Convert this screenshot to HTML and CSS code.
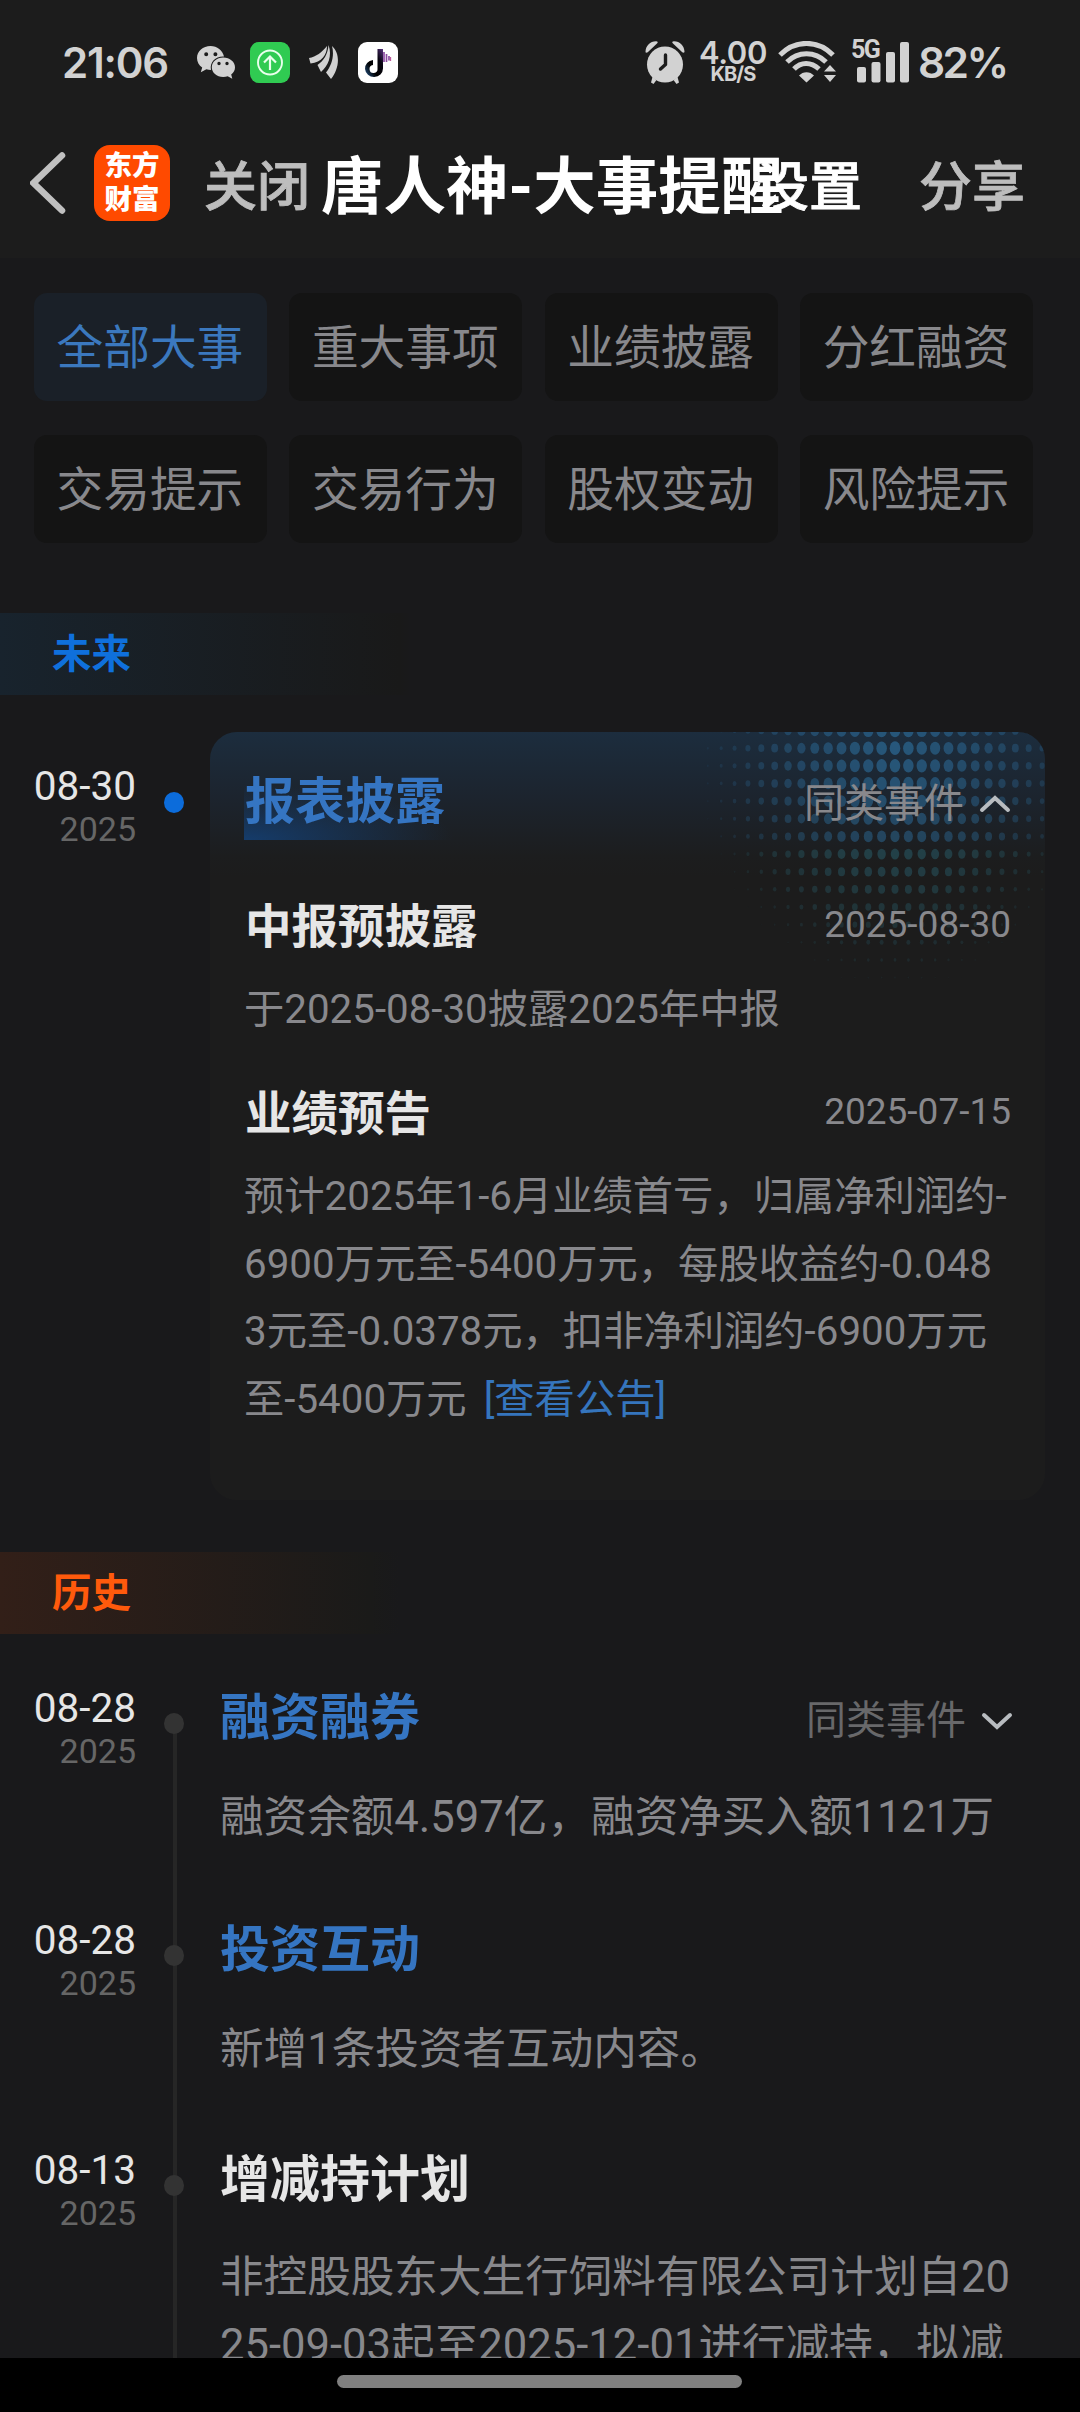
FILE: index.html
```html
<!DOCTYPE html>
<html lang="zh-CN">
<head>
<meta charset="utf-8">
<title>唐人神-大事提醒</title>
<link rel="stylesheet" href="styles.css">
</head>
<body>
<div class="screen">
  <header class="top">
    <div class="status">
      <span class="clock">21:06</span>
      <svg class="i-wechat" viewBox="0 0 38 33" width="38" height="33">
        <path fill="#d2d2d2" fill-rule="evenodd" d="M13.500 0C6 0 0 5.200 0 12c0 4 2 7.300 5.200 9.500L3.800 26.200 9.400 23.300c1.500.5 3 .7 4.600.7-1.500-8.500 5-14 13-13.500C25.600 4.500 20.200 0 13.500 0ZM9.200 6.200a2 2 0 1 1 0 4 2 2 0 0 1 0-4Zm9.200 0a2 2 0 1 1 0 4 2 2 0 0 1 0-4Z"/>
        <path fill="#d2d2d2" fill-rule="evenodd" d="M26.200 11.500C19.600 11.500 14.800 16 14.800 21.300S19.600 31 26.200 31c1.700 0 3-.3 4.500-.8l4.600 2.500-1.100-4.200c2.500-1.800 3.800-4.200 3.800-7.200 0-5.300-5-9.800-11.800-9.800ZM22 15.800a1.700 1.700 0 1 1 0 3.400 1.700 1.700 0 0 1 0-3.400Zm8 0a1.700 1.700 0 1 1 0 3.400 1.700 1.700 0 0 1 0-3.400Z"/>
      </svg>
      <svg class="i-up" viewBox="0 0 40 41" width="40" height="41">
        <rect width="40" height="41" rx="9" fill="#30cb52"/>
        <g fill="none" stroke="#e8ffec" stroke-width="1.900"><circle cx="20" cy="20.500" r="12"/><path d="M20 28V14.500M14 20.500l6-6 6 6" stroke-width="2.200"/></g>
      </svg>
      <svg class="i-wing" viewBox="0 0 30 34" width="30" height="34">
        <g fill="#d2d2d2"><path d="M0 13C7 12 13 7 18 1c0 9-5 16-16.500 17.500Z"/><path d="M19.500 0c4 11-.5 21-7.500 27L8.500 20C14.500 16 19 9 19.500 0Z"/><path d="M23 1c9 8 7 23-1 33L17 27.500C23 20 25.500 10 23 1Z"/></g>
      </svg>
      <svg class="i-tiktok" viewBox="0 0 40 41" width="40" height="41">
        <defs><linearGradient id="note" x1="0" y1="1" x2="1" y2="0"><stop offset="0" stop-color="#28588c"/><stop offset=".35" stop-color="#000"/><stop offset=".7" stop-color="#080510"/><stop offset="1" stop-color="#56307c"/></linearGradient></defs>
        <rect width="40" height="41" rx="9" fill="#fff"/>
        <path fill="url(#note)" d="M19.500 7h5.500v19.500a9 8.500 0 1 1-10-8.500v5a4 4 0 1 0 4.500 3.500Z"/>
        <path stroke="#8c4ca3" stroke-width="1.700" d="M26 10v10M28.500 12v8M31 14v4.500"/>
        <path stroke="#bc5c9c" stroke-width="1.300" d="M32.500 15v4"/>
      </svg>
      <svg class="i-alarm" viewBox="0 0 40 43" width="40" height="43">
        <g fill="#d2d2d2"><circle cx="20" cy="23.500" r="18"/><path d="M.5 10.500C1 4.500 5 .5 11 .3 13 .3 13.200 1.500 12 2.500L3 11C2 12 .500 12 .5 10.500ZM39.500 10.500C39 4.500 35 .5 29 .3 27 .3 26.800 1.500 28 2.500L37 11C38 12 39.500 12 39.500 10.500Z"/><path d="M7.500 36l4 3L8.500 43 6 41.500ZM32.500 36l-4 3 3 4 2.500-1.500Z"/></g>
        <path d="M20.500 14v9.500L15.500 28" fill="none" stroke="#1c1c1c" stroke-width="3.400" stroke-linecap="round" stroke-linejoin="round"/>
      </svg>
      <div class="speed"><b>4.00</b><i>KB/S</i></div>
      <svg class="i-wifi" viewBox="0 0 58 42" width="58" height="42">
        <g fill="none" stroke="#d2d2d2" stroke-width="5"><path d="M2 14C17-1.500 40-1.500 55 14"/><path d="M9 21C20 10 37 10 48 21"/><path d="M16 28C23 20.500 33 20.500 41 28"/></g>
        <path fill="#d2d2d2" d="M21 34.500C25 30 32 30 36 34.500L28.500 41.500ZM52 24l6 6.500H46ZM46 34h12l-6 7Z"/>
      </svg>
      <div class="signal">
        <span class="gen">5G</span>
        <svg viewBox="0 0 58 42" width="58" height="42"><g fill="#d2d2d2"><rect x="6" y="26" width="9" height="15.500" rx="2"/><rect x="20.500" y="21" width="9" height="20.500" rx="2"/><rect x="35" y="11" width="9" height="30.500" rx="2"/><rect x="49" y="1" width="9" height="40.500" rx="2"/></g></svg>
      </div>
      <span class="battery">82%</span>
    </div>
    <nav class="nav">
      <svg class="back" viewBox="0 0 36 62" width="36" height="62"><path d="M32 3.500L3.500 31 32 58.500" fill="none" stroke="#c0c0c0" stroke-width="6.500" stroke-linecap="round"/></svg>
      <div class="logo"><span>东方</span><span>财富</span></div>
      <span class="nav-link">关闭</span>
      <h1 class="title">唐人神-大事提醒</h1>
      <span class="nav-link setting">设置</span>
      <span class="nav-link share">分享</span>
    </nav>
  </header>

  <div class="filters">
    <span class="chip chip-on">全部大事</span><span class="chip">重大事项</span><span class="chip">业绩披露</span><span class="chip">分红融资</span>
    <span class="chip">交易提示</span><span class="chip">交易行为</span><span class="chip">股权变动</span><span class="chip">风险提示</span>
  </div>

  <h2 class="section future">未来</h2>
  <div class="row row-card">
    <div class="date"><b>08-30</b><span>2025</span></div>
    <div class="axis"><i class="dot"></i></div>
    <article class="card">
      <svg class="halftone" id="halftone" viewBox="0 0 350 250" width="350" height="250"></svg>
      <div class="head">
        <h3 class="event link marked">报表披露</h3>
        <span class="more">同类事件<svg viewBox="0 0 32 18" width="32" height="18"><path d="M3 15L16 3l13 12"/></svg></span>
      </div>
      <div class="sub first"><h4>中报预披露</h4><time>2025-08-30</time></div>
      <p class="detail">于2025-08-30披露2025年中报</p>
      <div class="sub second"><h4>业绩预告</h4><time>2025-07-15</time></div>
      <p class="detail">预计2025年1-6月业绩首亏，归属净利润约-<br>6900万元至-5400万元，每股收益约-0.048<br>3元至-0.0378元，扣非净利润约-6900万元<br>至-5400万元 <a class="notice">[查看公告]</a></p>
    </article>
  </div>

  <h2 class="section history">历史</h2>
  <div class="list">
    <div class="row item">
      <div class="date"><b>08-28</b><span>2025</span></div>
      <div class="axis line-start"><i class="dot"></i></div>
      <div class="body">
        <div class="head"><h3 class="event link">融资融券</h3>
        <span class="more dim">同类事件<svg viewBox="0 0 32 18" width="32" height="18"><path d="M3 3l13 12L29 3"/></svg></span></div>
        <p>融资余额4.597亿，融资净买入额1121万</p>
      </div>
    </div>
    <div class="row item item-short">
      <div class="date"><b>08-28</b><span>2025</span></div>
      <div class="axis line"><i class="dot"></i></div>
      <div class="body">
        <div class="head"><h3 class="event link">投资互动</h3></div>
        <p>新增1条投资者互动内容。</p>
      </div>
    </div>
    <div class="row item">
      <div class="date"><b>08-13</b><span>2025</span></div>
      <div class="axis line"><i class="dot"></i></div>
      <div class="body">
        <div class="head"><h3 class="event">增减持计划</h3></div>
        <p class="long">非控股股东大生行饲料有限公司计划自20<br>25-09-03起至2025-12-01进行减持，拟减</p>
      </div>
    </div>
  </div>
  <footer class="home"><span></span></footer>
</div>
<script src="halftone.js"></script>
</body>
</html>
```
FILE: styles.css
```css
* { box-sizing: border-box; margin: 0; padding: 0; }
body { background: #19191b; }
.screen {
  width: 1080px; height: 2412px; overflow: hidden;
  display: flex; flex-direction: column;
  font-family: Roboto, "Noto Sans CJK SC", sans-serif;
  color: #e6e6e6; white-space: nowrap;
  background: #19191b;
}
svg { display: block; flex: none; }
i, b { font-style: normal; font-weight: 400; }

/* status bar */
.top { height: 258px; flex: none; background: #1c1c1c; }
.status { height: 124px; display: flex; align-items: center; color: #d2d2d2; font-family: Inter, sans-serif; font-weight: 600; }
.clock { width: 135px; padding-left: 62px; font-size: 42px; letter-spacing: -1.2px; flex: none; }
.i-wechat { margin-left: 62px; }
.i-up { margin-left: 15px; }
.i-wing { margin-left: 19px; }
.i-tiktok { margin-left: 19px; }
.i-alarm { margin-left: 247px; }
.speed { margin-left: 14px; width: 68px; display: flex; flex-direction: column; align-items: center; }
.speed b { font-size: 31px; line-height: 23px; font-weight: 600; letter-spacing: -0.4px; }
.speed i { font-size: 20px; line-height: 20px; font-weight: 700; letter-spacing: -0.9px; }
.i-wifi { margin-left: 11px; }
.signal { display: grid; margin-left: 15px; }
.signal > * { grid-area: 1 / 1; }
.gen { font-size: 25px; line-height: 18px; letter-spacing: -1.5px; font-family: Roboto, sans-serif; font-weight: 700; }
.battery { margin-left: 9px; padding-top: 1px; font-size: 42.500px; letter-spacing: -2.6px; }

/* navigation */
.nav { position: relative; height: 118px; display: flex; align-items: center; }
.back { margin-left: 30px; }
.logo {
  margin-left: 28px; width: 76px; height: 76px; border-radius: 16px; background: #ff4a00;
  display: flex; flex-direction: column; align-items: center; justify-content: center;
  color: #fff; font-size: 27.500px; line-height: 34px; font-weight: 900;
}
.nav-link { margin-left: 34px; font-size: 53px; line-height: 70px; font-weight: 500; color: #bdbdbd; padding-top: 9px; -webkit-text-stroke: 0.8px; }
.title { position: absolute; left: 321px; top: 21px; font-size: 62.500px; line-height: 86px; font-weight: 700; color: #fff; }
.setting { margin-left: 446px; color: #fff; }
.share { margin-left: 57px; }

/* filters */
.filters { flex: none; padding: 35px 47px 70px 34px; display: grid; grid-template-columns: repeat(4, 1fr); gap: 34px 22.500px; }
.chip { height: 108px; line-height: 110px; border-radius: 13px; background: #141414; text-align: center; font-size: 46.700px; color: #88888c; padding-right: 1px; }
.chip-on { background: #1a2028; color: #3b78be; }

/* section labels */
.section { flex: none; height: 82px; line-height: 84px; padding-left: 52px; font-size: 39.500px; font-weight: 700; }
.future { color: #0f70dc; background: linear-gradient(90deg, #18232d, #191919 400px, #19191b 410px); }
.history { margin-top: 52px; color: #ff5a0c; background: linear-gradient(90deg, #321f18, #1a1a19 370px, #19191b 400px); }

/* timeline */
.row { display: grid; grid-template-columns: 136px 74px 1fr; flex: none; }
.date { text-align: right; padding-top: 11px; }
.date b { display: block; font-size: 40.500px; line-height: 46px; color: #e6e6e6; }
.date span { display: block; font-size: 34px; line-height: 40px; color: #666; }
.axis { display: flex; justify-content: center; padding: 39px 0 0 2px; }
.dot { width: 20px; height: 21px; border-radius: 50%; background: #333; }
.line { background: linear-gradient(#262626, #262626) 37px 0 / 4px 100% no-repeat; }
.line-start { background: linear-gradient(#262626, #262626) 37px 50px / 4px 100% no-repeat; }
.row-card { margin-top: 37px; }
.row-card .date { padding-top: 31px; }
.row-card .axis { padding-top: 60px; }
.row-card .dot { background: #0c6cdb; }

.card {
  position: relative; width: 835px; height: 768px; padding: 33px 34px 0; border-radius: 27px;
  background: linear-gradient(#1c2d3e, #1c242e 65px, #1c1d1e 125px, #1c1c1c 145px); overflow: hidden;
}
.card > * { position: relative; }
.card .halftone { position: absolute; right: 0; top: 0; }
.head { display: flex; justify-content: space-between; align-items: center; }
.event { font-size: 50px; line-height: 60px; font-weight: 700; }
.link { color: #3575c2; }
.marked { line-height: 75px; padding: 0 10px 0 1px; background: radial-gradient(ellipse 210px 55px at 0 100%, #153c6b, rgba(21, 60, 107, 0)); }
.more { display: flex; align-items: center; gap: 15px; font-size: 40px; line-height: 60px; color: #88888c; padding-top: 3px; }
.more path { fill: none; stroke: #b8bcc0; stroke-width: 4; stroke-linecap: round; }
.dim { color: #68686a; padding-top: 3px; margin-bottom: -3px; }
.sub { display: flex; justify-content: space-between; height: 60px; }
.sub h4 { font-size: 46.500px; line-height: 60px; font-weight: 700; padding-left: 1px; }
.sub time { font-size: 37px; line-height: 53px; color: #88888c; }
.first { margin: 57px 0 19px; }
.first time { padding-top: 1px; }
.second { margin: 41px 0 19px; }
.second time { padding-top: 1px; }
.detail { font-size: 40.300px; line-height: 67.400px; color: #88888c; }
.notice { color: #3575bd; margin-left: 7px; }

.list { flex: 1; min-height: 0; overflow: hidden; padding-top: 40px; }
.item { height: 232px; }
.item-short { height: 230px; }
.item:last-child { height: 260px; }
.body { padding: 14px 67px 0 10px; }
.body p { margin-top: 36px; font-size: 43.600px; line-height: 68px; color: #88888c; }
.body .long { margin-top: 34px; }

/* gesture bar */
.home { flex: none; height: 54px; background: #000; padding-top: 17px; }
.home span { display: block; width: 405px; height: 13px; border-radius: 7px; background: #808080; margin-left: 337px; }
```
FILE: halftone.js
```js
// Halftone dots: largest and brightest near the top, fading out from there.
const svg = document.getElementById('halftone');
const cx = 200, cy = 16;
for (let row = 0; row < 15; row++) {
  for (let col = -15; col <= 11; col++) {
    const x = cx + col * 13.37, y = -1.5 + row * 17.65;
    const d = Math.hypot((x - cx) / 208, (y - cy) / 250);
    if (d >= 1) continue;
    const r = 5.3 * (1 - Math.pow(d, 1.9));
    const e = document.createElementNS('http://www.w3.org/2000/svg', 'ellipse');
    e.setAttribute('cx', x);
    e.setAttribute('cy', y);
    e.setAttribute('rx', r);
    e.setAttribute('ry', r * 1.28);
    e.setAttribute('fill', row < 7 ? '#2d6f9e' : '#2c6c7c');
    e.setAttribute('opacity', (0.66 * Math.pow(1 - d, 0.72)).toFixed(3));
    svg.appendChild(e);
  }
}
```
